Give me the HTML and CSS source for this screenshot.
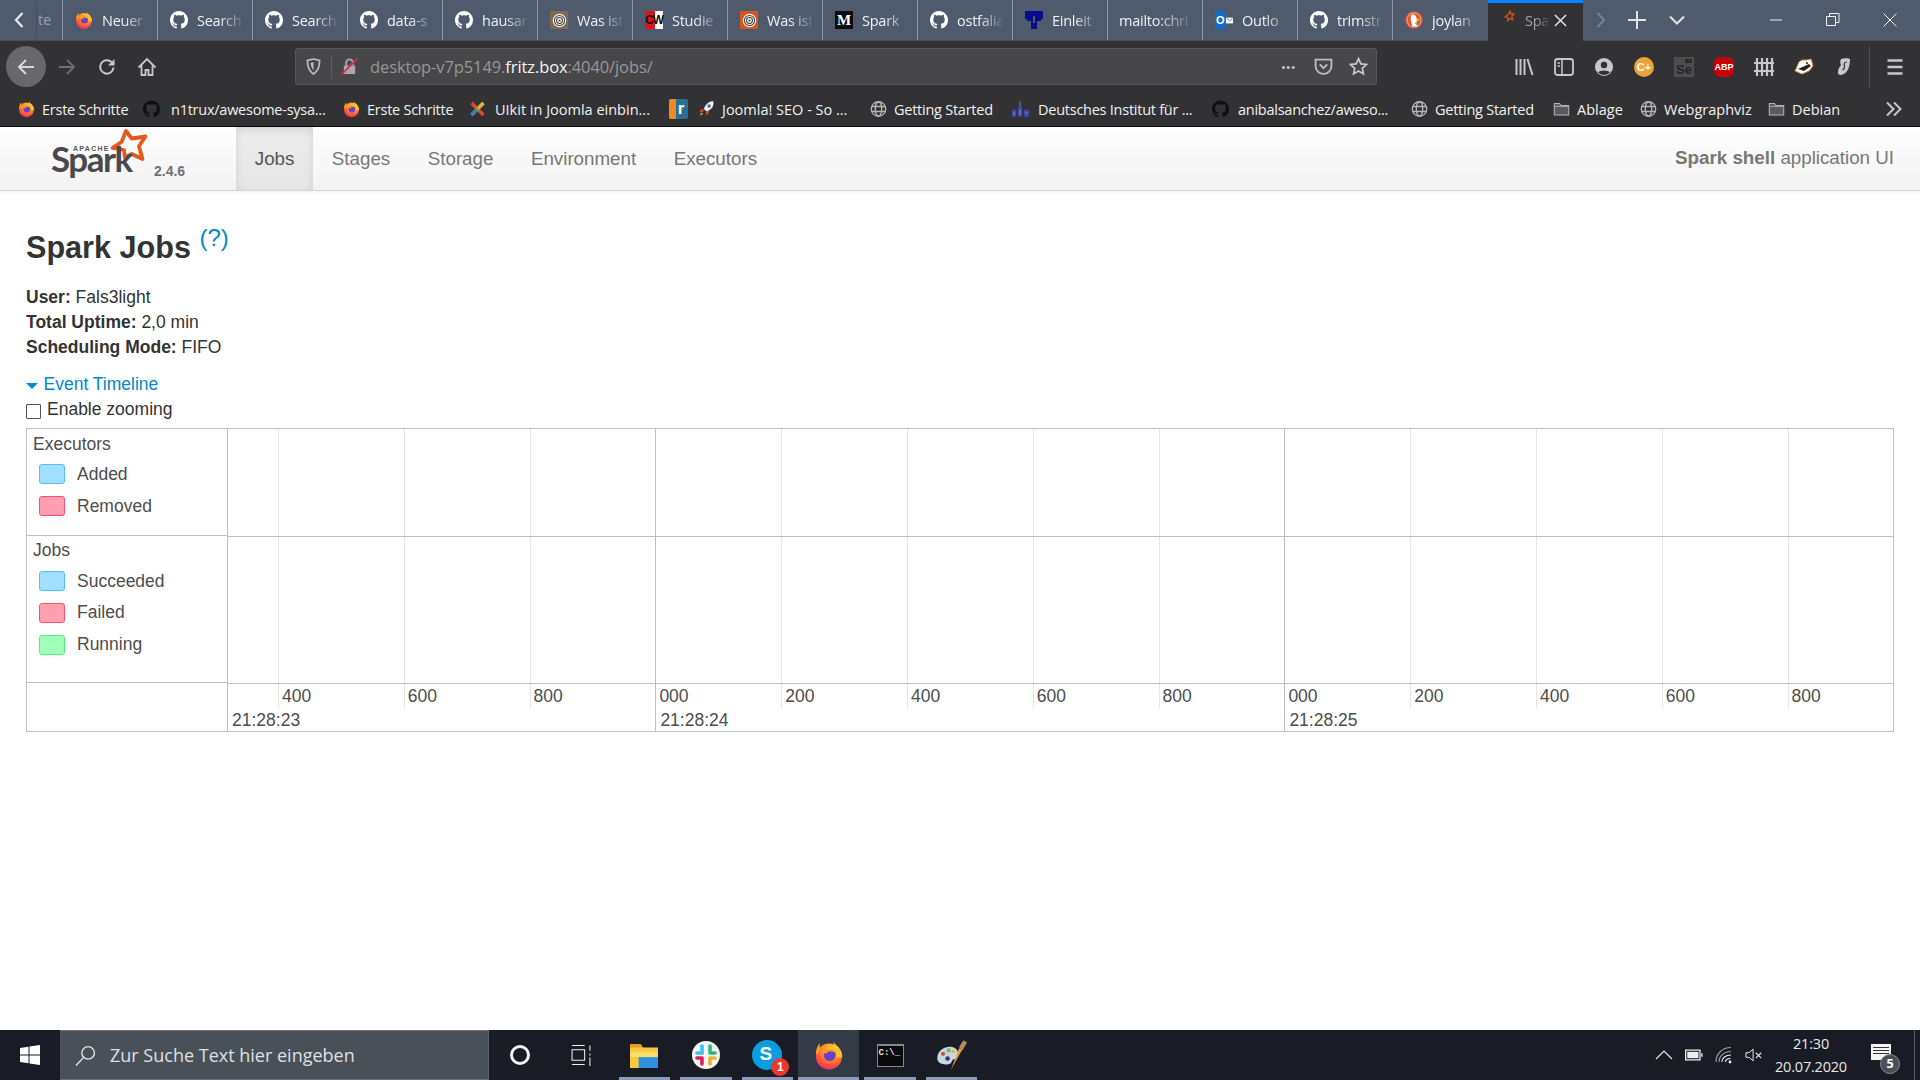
FILE: index.html
```html
<!DOCTYPE html>
<html lang="de">
<head>
<meta charset="utf-8">
<title>Spark shell - Spark Jobs</title>
<link rel="stylesheet" href="styles.css">
</head>
<body>
<svg class="defs" width="0" height="0" aria-hidden="true">
  <defs>
    <radialGradient id="ffg" cx="0.6" cy="0.25" r="0.85">
      <stop offset="0" stop-color="#ffd23d"/><stop offset="0.45" stop-color="#ff8a1f"/><stop offset="0.78" stop-color="#ff3f4f"/><stop offset="1" stop-color="#e3247a"/>
    </radialGradient>
    <symbol id="ff" viewBox="0 0 20 20">
      <circle cx="10" cy="11" r="8.700" fill="url(#ffg)"/>
      <path d="M13 0c0 2.500 1.800 3 3.500 5 1.500 2 2.500 4 2.300 6.500h-4C14.500 8 13 5 13 0z" fill="#ffc02e"/>
      <path d="M4 2c-.3 2-.3 3 0 4.500L2 10 1.300 9C1.300 6 2.500 3.500 4 2z" fill="#ff9f1f"/>
      <circle cx="10.500" cy="10" r="4" fill="#6a3fc9"/>
      <path d="M5.500 8c1.500-2 5-3 7.500-1.500 1.500.8 2 2 2 3-1-1.500-2.500-2-4-2-1.500 0-2 .5-2.500 1.500-1 .2-2-.3-3-1z" fill="#ff9f1f"/>
    </symbol>
    <symbol id="gh" viewBox="0 0 16 16">
      <path d="M8 0C3.580 0 0 3.580 0 8c0 3.540 2.290 6.530 5.470 7.590.4.070.55-.17.55-.38 0-.19-.01-.82-.01-1.490-2.010.37-2.530-.49-2.690-.94-.09-.23-.48-.94-.82-1.130-.28-.15-.68-.52-.01-.53.63-.01 1.080.58 1.230.82.72 1.210 1.870.87 2.330.66.07-.52.28-.87.51-1.070-1.780-.2-3.640-.89-3.640-3.950 0-.87.31-1.590.82-2.150-.08-.2-.36-1.020.08-2.120 0 0 .67-.21 2.200.82.64-.18 1.320-.27 2-.27.68 0 1.360.09 2 .27 1.530-1.040 2.200-.82 2.200-.82.44 1.100.16 1.920.08 2.120.51.56.82 1.270.82 2.150 0 3.070-1.870 3.750-3.650 3.950.29.25.54.73.54 1.480 0 1.070-.01 1.930-.01 2.200 0 .21.15.46.55.38A8.013 8.013 0 0 0 16 8c0-4.420-3.580-8-8-8z" fill="currentColor"/>
    </symbol>
    <symbol id="target" viewBox="0 0 20 20">
      <circle cx="10" cy="10" r="8" fill="#f4f1ea"/>
      <circle cx="10" cy="10" r="6" fill="none" stroke="#444" stroke-width="1.200"/>
      <circle cx="10" cy="10" r="3.500" fill="none" stroke="#444" stroke-width="1.200"/>
      <circle cx="10" cy="10" r="1.300" fill="#444"/>
    </symbol>
    <symbol id="globe" viewBox="0 0 20 20">
      <g fill="none" stroke="#b5b5b7" stroke-width="1.600">
        <circle cx="10" cy="10" r="8.500"/><ellipse cx="10" cy="10" rx="3.800" ry="8.500"/>
        <path d="M1.800 7h16.400M1.800 13h16.400"/>
      </g>
    </symbol>
    <symbol id="folder" viewBox="0 0 20 20">
      <path d="M1.500 3.500h6l2 2.500h9v11h-17z" fill="#5a5a5c" stroke="#b5b5b7" stroke-width="1.200"/>
      <path d="M1.500 7h17" stroke="#b5b5b7" stroke-width="1"/>
    </symbol>
  </defs>
</svg>

<div class="page">
  <div class="tabbar">
    <div class="tab tab-first">
      <svg class="tab-back" viewBox="0 0 12 18"><path d="M9.500 2 3 9l6.500 7" fill="none" stroke="#e6e8eb" stroke-width="2.200"/></svg>
      <span class="tab-sliver">te</span>
    </div>
    <div class="tab"><svg class="ti"><use href="#ff"/></svg><span class="tab-label">Neuer</span></div>
    <div class="tab"><svg class="ti gh-w"><use href="#gh"/></svg><span class="tab-label">Search</span></div>
    <div class="tab"><svg class="ti gh-w"><use href="#gh"/></svg><span class="tab-label">Search</span></div>
    <div class="tab"><svg class="ti gh-w"><use href="#gh"/></svg><span class="tab-label">data-s</span></div>
    <div class="tab"><svg class="ti gh-w"><use href="#gh"/></svg><span class="tab-label">hausar</span></div>
    <div class="tab"><span class="ti fav-target-a"><svg class="ti-in"><use href="#target"/></svg></span><span class="tab-label">Was ist</span></div>
    <div class="tab"><span class="ti fav-cw">CW</span><span class="tab-label">Studie</span></div>
    <div class="tab"><span class="ti fav-target-b"><svg class="ti-in"><use href="#target"/></svg></span><span class="tab-label">Was ist</span></div>
    <div class="tab"><span class="ti fav-m">M</span><span class="tab-label">Spark</span></div>
    <div class="tab"><svg class="ti gh-w"><use href="#gh"/></svg><span class="tab-label">ostfalia</span></div>
    <div class="tab"><svg class="ti" viewBox="0 0 18 18"><path d="M0 0h18v8h-2v2h-4v8H6v-8H2V8H0z" fill="#0a0a8c"/><path d="M8 5h2v7H8z" fill="#4f5b6d"/></svg><span class="tab-label">Einleit</span></div>
    <div class="tab tab-plain"><span class="tab-label">mailto:chri</span></div>
    <div class="tab"><span class="ti fav-ol"><span class="fav-ol-o">O</span><svg class="fav-ol-m" viewBox="0 0 9 9"><path d="M0 1h9v7H0z" fill="#fff"/><path d="m1 2 3.500 3L8 2" fill="none" stroke="#0f6fc6"/></svg></span><span class="tab-label">Outlo</span></div>
    <div class="tab"><svg class="ti gh-w"><use href="#gh"/></svg><span class="tab-label">trimstr</span></div>
    <div class="tab tab-last"><svg class="ti" viewBox="0 0 18 18"><circle cx="9" cy="9" r="8.700" fill="#de5833"/><circle cx="9" cy="9" r="7" fill="none" stroke="#f4c7b4" stroke-width=".7"/><path d="M6 4c3-1.500 5.500.5 5.500 3.500l2 1-2 1.200c0 2 .5 4 1 5.800H7.500C6.500 12 5 8 6 4z" fill="#fff"/><path d="M10 9l4-1.200-.2 2.400z" fill="#f2b02c"/><path d="M9.500 11.500l2.500.5-.3 2.500z" fill="#65bc46"/></svg><span class="tab-label">joylan</span></div>
    <div class="tab tab-active">
      <svg class="ti ti-spark" viewBox="0 0 18 18"><path d="m12 1 .8 3 3 0-2 2.500 1 3-3-1-2 2 0-3-2.500-1 3-2z" fill="none" stroke="#c8501e" stroke-width="1.500"/></svg>
      <span class="tab-label tab-label-active">Spa</span>
      <svg class="tab-x" viewBox="0 0 14 14"><path d="m1 1 12 12M13 1 1 13" stroke="#e6e6e8" stroke-width="1.600"/></svg>
    </div>
    <div class="tabbar-tools">
      <svg class="tool-fwd" viewBox="0 0 12 18"><path d="M2.500 2 9 9l-6.500 7" fill="none" stroke="#79838f" stroke-width="2"/></svg>
      <svg class="tool-plus" viewBox="0 0 18 18"><path d="M9 0v18M0 9h18" stroke="#e0e3e6" stroke-width="2"/></svg>
      <svg class="tool-down" viewBox="0 0 16 10"><path d="m1 1.500 7 7 7-7" fill="none" stroke="#e0e3e6" stroke-width="2"/></svg>
    </div>
    <div class="winctl">
      <svg class="win-btn" viewBox="0 0 14 14"><path d="M1 7h12" stroke="#f2f2f2" stroke-width="1"/></svg>
      <svg class="win-btn" viewBox="0 0 14 14"><path d="M.5 3.500h9v9h-9zM3.500 3.500v-3h9.500v9h-3.500" fill="none" stroke="#f2f2f2" stroke-width="1"/></svg>
      <svg class="win-btn" viewBox="0 0 14 14"><path d="m.5.5 13 13M13.500.5l-13 13" stroke="#f2f2f2" stroke-width="1"/></svg>
    </div>
  </div>

  <div class="toolbar">
    <div class="nav-btn back-btn"><svg viewBox="0 0 20 20" class="nav-ic"><path d="M18 10H3M10 3l-7 7 7 7" fill="none" stroke="#d8d8d8" stroke-width="2"/></svg></div>
    <div class="nav-btn"><svg viewBox="0 0 20 20" class="nav-ic"><path d="M2 10h15M10 3l7 7-7 7" fill="none" stroke="#6f6f71" stroke-width="1.800"/></svg></div>
    <div class="nav-btn"><svg viewBox="0 0 20 20" class="nav-ic"><path d="M16.500 10.500a6.700 6.700 0 1 1-2-5.400L17 7.500" fill="none" stroke="#c8c8ca" stroke-width="2"/><path d="M17.500 2v6.500H11z" fill="#c8c8ca"/></svg></div>
    <div class="nav-btn"><svg viewBox="0 0 20 20" class="nav-ic"><path d="M1.500 10.500 10 2l8.500 8.500M4.500 8.500V18h4v-5h3v5h4V8.500" fill="none" stroke="#c8c8ca" stroke-width="1.800"/></svg></div>
    <div class="urlbar">
      <svg class="url-shield" viewBox="0 0 16 18"><path d="M1.500 2.500 8 1l6.500 1.500c0 6-1 11-6.500 14.500C2.500 13.500 1.500 8.500 1.500 2.500z" fill="none" stroke="#bdbdbf" stroke-width="1.800"/><path d="M5 5l3-.6V13C6 11 5 8 5 5z" fill="#bdbdbf"/></svg>
      <span class="url-sep"></span>
      <svg class="url-lock" viewBox="0 0 18 18"><path d="M3 8h12v9H3z" fill="#a9a9ab"/><path d="M5.500 8V5a3.500 3.500 0 0 1 7 0v3" fill="none" stroke="#a9a9ab" stroke-width="2"/><path d="M1 17 17 1" stroke="#e22850" stroke-width="2"/></svg>
      <span class="url-text">desktop-v7p5149.<b class="url-host">fritz.box</b>:4040/jobs/</span>
      <span class="url-dots">•••</span>
      <svg class="url-ic" viewBox="0 0 18 18"><path d="M1.500 2.500h15v6a7.500 7.500 0 0 1-15 0z" fill="none" stroke="#bdbdbf" stroke-width="1.800"/><path d="m5.500 7 3.500 3.500L12.500 7" fill="none" stroke="#bdbdbf" stroke-width="1.800"/></svg>
      <svg class="url-ic url-star" viewBox="0 0 20 20"><path d="m10 1.800 2.500 5.400 5.800.7-4.300 4 1.200 5.900-5.200-3-5.200 3 1.200-5.900-4.300-4 5.800-.7z" fill="none" stroke="#c8c8ca" stroke-width="1.800"/></svg>
    </div>
    <div class="ext-row">
      <svg class="ext" viewBox="0 0 20 20"><path d="M2.500 2v16M6.500 2v16M10.500 2v16M13.500 2l5 16" fill="none" stroke="#c8c8ca" stroke-width="2"/></svg>
      <svg class="ext" viewBox="0 0 20 20"><rect x="1" y="2" width="18" height="16" rx="2.500" fill="none" stroke="#c8c8ca" stroke-width="1.800"/><path d="M8 2v16M3.500 6h2.500M3.500 9h2.500" stroke="#c8c8ca" stroke-width="1.500"/></svg>
      <svg class="ext" viewBox="0 0 20 20"><circle cx="10" cy="10" r="9" fill="#c8c8ca"/><circle cx="10" cy="8" r="3.200" fill="#323234"/><path d="M3.800 15.500c2-2.800 10.400-2.800 12.400 0A9 9 0 0 1 3.800 15.500z" fill="#323234"/></svg>
      <span class="ext ext-cplus">C+</span>
      <span class="ext ext-se">Se<span class="se-cam"></span></span>
      <span class="ext ext-abp">ABP</span>
      <svg class="ext" viewBox="0 0 20 20"><path d="M3 1v18M8 1v18M13 1v18M18 1v18M0 6h20M0 14h20" stroke="#c8c8ca" stroke-width="2.200"/></svg>
      <svg class="ext" viewBox="0 0 20 20"><path d="M1 14 5 5l3-2h5l4-1 1 3 1 4-4 5-7 3z" fill="#fff" stroke="#d98a3a"/><path d="M4 12 15 7l2 2-7 5z" fill="#222"/><circle cx="13" cy="6" r="1" fill="#222"/></svg>
      <svg class="ext" viewBox="0 0 20 20"><path d="M7 2c3-1 7-1 9 0 0 7-2 15-9 16-2 0-3-1-3-2 0-5 2-6 3-8-1-2-1-4 0-6z" fill="#c8c8ca"/><path d="M13 5c-3 0-3 2-2.500 4 .3 2-.5 3-2 4" fill="none" stroke="#323234" stroke-width="1.200"/></svg>
      <span class="ext-sep"></span>
      <svg class="ext" viewBox="0 0 20 20"><path d="M2.500 3.500h15M2.500 10h15M2.500 16.500h15" stroke="#c8c8ca" stroke-width="2.400"/></svg>
    </div>
  </div>

  <div class="bookmarks">
    <div class="bm bm-1"><svg class="bi"><use href="#ff"/></svg><span>Erste Schritte</span></div>
    <div class="bm bm-2"><svg class="bi gh-k"><use href="#gh"/></svg><span>n1trux/awesome-sysa...</span></div>
    <div class="bm bm-3"><svg class="bi"><use href="#ff"/></svg><span>Erste Schritte</span></div>
    <div class="bm bm-4"><svg class="bi" viewBox="0 0 20 20"><path d="m3 3 14 14" stroke="#e2492c" stroke-width="4"/><path d="M17 3 3 17" stroke="#5fb04a" stroke-width="4"/><path d="m3 17 6-6" stroke="#3d7fc2" stroke-width="4"/><path d="m17 3-6 6" stroke="#f3a93a" stroke-width="4"/></svg><span>UIkit in Joomla einbin...</span></div>
    <div class="bm bm-5"><span class="bi fav-r">r</span></div>
    <div class="bm bm-6"><svg class="bi" viewBox="0 0 20 20"><path d="M18 1c-5 0-9 3-11 9l3 3c6-2 9-6 8-12z" fill="#f1f1f1"/><circle cx="13" cy="6.500" r="2" fill="#2d6cc0"/><path d="M7 10 3 11l-1 3 4-1zM10 13l-1 4 3-1 1-4z" fill="#e2492c"/><path d="m4 14-2 4 4-2z" fill="#f2a73a"/></svg><span>Joomla! SEO - So ...</span></div>
    <div class="bm bm-7"><svg class="bi"><use href="#globe"/></svg><span>Getting Started</span></div>
    <div class="bm bm-8"><svg class="bi" viewBox="0 0 20 20"><path d="M0 11h5v8H0zM7 7h5v12H7zM14 11h6v8h-6z" fill="#3d4aa8"/><path d="M9 1h1v6H9z" fill="#8090d8"/><path d="M2 14h1v3H2zM9 11h1v6H9zM16 14h2v1h-2z" fill="#9aa3e0"/></svg><span>Deutsches Institut für ...</span></div>
    <div class="bm bm-9"><svg class="bi gh-k"><use href="#gh"/></svg><span>anibalsanchez/aweso...</span></div>
    <div class="bm bm-10"><svg class="bi"><use href="#globe"/></svg><span>Getting Started</span></div>
    <div class="bm bm-11"><svg class="bi"><use href="#folder"/></svg><span>Ablage</span></div>
    <div class="bm bm-12"><svg class="bi"><use href="#globe"/></svg><span>Webgraphviz</span></div>
    <div class="bm bm-13"><svg class="bi"><use href="#folder"/></svg><span>Debian</span></div>
    <svg class="bm-more" viewBox="0 0 18 16"><path d="m2 1.500 6.500 6.500L2 14.500M9 1.500l6.500 6.500L9 14.500" fill="none" stroke="#c8c8ca" stroke-width="2"/></svg>
  </div>

  <nav class="spark-nav">
    <div class="brand">
      <svg class="spark-logo" viewBox="0 0 100 52">
        <path d="M75-1 80.700 6.500 94.500 4.500 88 14 91.500 27 80.700 22 74 26 73 18 61.500 16 70.700 9.700z" fill="none" stroke="#e25a1c" stroke-width="3.800" stroke-linejoin="round"/>
        <text class="logo-apache" x="22" y="19">APACHE</text>
        <text class="logo-spark" x="0" y="40">Spark</text>
      </svg>
      <span class="version">2.4.6</span>
    </div>
    <a class="nav-link active">Jobs</a>
    <a class="nav-link">Stages</a>
    <a class="nav-link">Storage</a>
    <a class="nav-link">Environment</a>
    <a class="nav-link">Executors</a>
    <p class="app-name"><strong>Spark shell</strong> application UI</p>
  </nav>

  <main class="content">
    <h3 class="title">Spark Jobs <sup class="help">(?)</sup></h3>
    <ul class="summary">
      <li><strong>User:</strong> Fals3light</li>
      <li><strong>Total Uptime:</strong> 2,0 min</li>
      <li><strong>Scheduling Mode:</strong> FIFO</li>
    </ul>
    <div class="expander"><span class="caret"></span><span>Event Timeline</span></div>
    <label class="zoom-opt"><input type="checkbox" class="zoom-check"><span>Enable zooming</span></label>
    <div class="timeline">
      <div class="legend">
        <div class="legend-group group-exec">
          <div class="legend-title">Executors</div>
          <div class="legend-item"><span class="swatch blue"></span>Added</div>
          <div class="legend-item"><span class="swatch red"></span>Removed</div>
        </div>
        <div class="legend-group group-jobs">
          <div class="legend-title">Jobs</div>
          <div class="legend-item"><span class="swatch blue"></span>Succeeded</div>
          <div class="legend-item"><span class="swatch red"></span>Failed</div>
          <div class="legend-item"><span class="swatch green"></span>Running</div>
        </div>
      </div>
      <div class="chart">
        <div class="grid-row row-exec">
          <div class="gc"></div><div class="gc"></div><div class="gc"></div><div class="gc major"></div><div class="gc"></div><div class="gc"></div><div class="gc"></div><div class="gc"></div><div class="gc major"></div><div class="gc"></div><div class="gc"></div><div class="gc"></div><div class="gc"></div><div class="gc last"></div>
        </div>
        <div class="grid-row row-jobs">
          <div class="gc"></div><div class="gc"></div><div class="gc"></div><div class="gc major"></div><div class="gc"></div><div class="gc"></div><div class="gc"></div><div class="gc"></div><div class="gc major"></div><div class="gc"></div><div class="gc"></div><div class="gc"></div><div class="gc"></div><div class="gc last"></div>
        </div>
        <div class="grid-row row-axis">
          <div class="ax"><div class="tick"></div><div class="time">21:28:23</div></div>
          <div class="ax"><div class="tick">400</div></div>
          <div class="ax"><div class="tick">600</div></div>
          <div class="ax major"><div class="tick tick-major">800</div></div>
          <div class="ax"><div class="tick">000</div><div class="time">21:28:24</div></div>
          <div class="ax"><div class="tick">200</div></div>
          <div class="ax"><div class="tick">400</div></div>
          <div class="ax"><div class="tick">600</div></div>
          <div class="ax major"><div class="tick tick-major">800</div></div>
          <div class="ax"><div class="tick">000</div><div class="time">21:28:25</div></div>
          <div class="ax"><div class="tick">200</div></div>
          <div class="ax"><div class="tick">400</div></div>
          <div class="ax"><div class="tick">600</div></div>
          <div class="ax last"><div class="tick tick-major">800</div></div>
        </div>
      </div>
    </div>
  </main>

  <footer class="taskbar">
    <div class="start"><svg class="win-logo" viewBox="0 0 20 20"><path d="M0 3l8.500-1.200V9.500H0zM9.500 1.600 20 0v9.500H9.500zM0 10.500h8.500v7.700L0 17zM9.500 10.500H20V20L9.500 18.400z" fill="#fff"/></svg></div>
    <div class="search"><svg class="search-ic" viewBox="0 0 20 20"><circle cx="12.500" cy="7.500" r="6" fill="none" stroke="#e8e8e8" stroke-width="1.300"/><path d="M8 12 1 19.500" stroke="#e8e8e8" stroke-width="1.300"/></svg><span>Zur Suche Text hier eingeben</span></div>
    <div class="tb-cell"><span class="cortana"></span></div>
    <div class="tb-cell tb-view"><svg class="tb-ic-view" viewBox="0 0 20 20"><path d="M1 .5h12M1 4.500h12v10H1zM1 18.500h12M18 .5v5M18 8v2M18 12v8" fill="none" stroke="#f0f0f0"/></svg></div>
    <div class="tb-cell app"><svg class="tb-ic" viewBox="0 0 26 24"><path d="M0 2h10l2 3h14v19H0z" fill="#f7c83f"/><path d="M0 2h10l2 3H0z" fill="#e0a020"/><path d="M8 13h18v11H8z" fill="#2f8fe0"/><path d="M0 9h26v5H0z" fill="#fbdc6a"/></svg></div>
    <div class="tb-cell app"><svg class="tb-ic-lg" viewBox="0 0 28 28"><circle cx="14" cy="14" r="14" fill="#f4f4f4"/><path d="M10 5v7" stroke="#36c5f0" stroke-width="3.600" stroke-linecap="round"/><path d="M5 12h5" stroke="#36c5f0" stroke-width="3.600" stroke-linecap="round"/><path d="M18 5v7M18 12h5" stroke="#2eb67d" stroke-width="3.600" stroke-linecap="round"/><path d="M5 17h5M10 17v6" stroke="#e01e5a" stroke-width="3.600" stroke-linecap="round"/><path d="M18 17h5M18 17v6" stroke="#ecb22e" stroke-width="3.600" stroke-linecap="round"/></svg></div>
    <div class="tb-cell app"><span class="skype"><span class="skype-s">S</span><span class="skype-badge">1</span></span></div>
    <div class="tb-cell app app-active"><svg class="tb-ic-ff"><use href="#ff"/></svg></div>
    <div class="tb-cell app"><span class="cmd">C:\_</span></div>
    <div class="tb-cell app"><svg class="tb-ic-paint" viewBox="0 0 28 28"><path d="M2 17C2 10 9 6 15 7c4 1 6 4 5 8-1 3-4 2-5 4-1 3-4 4-7 3-3 0-6-2-6-5z" fill="#c5d8e8"/><circle cx="7" cy="13" r="1.800" fill="#e2492c"/><circle cx="12" cy="10" r="1.800" fill="#6fbf4a"/><circle cx="16" cy="11" r="1.600" fill="#f2b02c"/><circle cx="11" cy="17" r="2" fill="#335"/><path d="M14 27 21 8l3 1z" fill="#e8a23c"/><path d="M21 7l4-6 3 2-4 7z" fill="#b88a5a"/></svg></div>
    <div class="tray">
      <svg class="tray-ic" viewBox="0 0 18 18"><path d="m1 13 8-8 8 8" fill="none" stroke="#e8e8e8" stroke-width="1.200"/></svg>
      <svg class="tray-ic" viewBox="0 0 20 18"><path d="M.7 3.700h16v10.600H.7z" fill="none" stroke="#f0f0f0" stroke-width="1.400"/><path d="M2.500 5.500h12.500v7H2.500z" fill="#f0f0f0"/><path d="M18 7h1.500v4H18z" fill="#f0f0f0"/></svg>
      <svg class="tray-ic" viewBox="0 0 18 18"><g fill="none" stroke="#9a9ea4" stroke-width="1.100"><path d="M1 16C1 8 7 1.500 16 1.500"/><path d="M4 16c0-5.500 4.500-10.500 12-10.500"/></g><g fill="none" stroke="#f0f0f0" stroke-width="1.100"><path d="M7 16c0-4 3.500-7 9-7"/><path d="M10.500 16c0-2 2-3.500 5-3.500"/></g><circle cx="15" cy="16" r="1.400" fill="#f0f0f0"/></svg>
      <svg class="tray-ic" viewBox="0 0 20 18"><path d="M1 6.500h3.500L9 2.500v13l-4.500-4H1z" fill="none" stroke="#e8e8e8" stroke-width="1.100"/><path d="m12 6.500 6 6M18 6.500l-6 6" stroke="#e8e8e8" stroke-width="1.200"/></svg>
      <div class="clock"><span>21:30</span><span>20.07.2020</span></div>
      <div class="notify"><span class="note-box"><span class="note-line"></span><span class="note-line"></span><span class="note-line"></span></span><span class="note-badge">5</span></div>
    </div>
  </footer>
</div>
</body>
</html>
```

FILE: styles.css
```css
* { box-sizing: border-box; }
html, body { margin: 0; height: 100%; }
body { font-family: "Liberation Sans", Arial, sans-serif; color: #333; background: #fff; overflow: hidden; }
.defs { position: absolute; }
.page { display: flex; flex-direction: column; height: 1080px; }

/* tab strip */
.tabbar { display: flex; height: 41px; background: #4f5b6d; flex: none; font-family: "Open Sans", sans-serif; border-bottom: 1px solid #444e5d; }
.tab { width: 95px; flex: none; display: flex; align-items: center; gap: 9px; padding: 0 10px 0 12px; border-right: 1px solid #8d97a5; overflow: hidden; color: #eef0f3; }
.tab-first { width: 63px; padding: 0 0 0 13px; gap: 0; }
.tab-back { width: 12px; height: 18px; flex: none; }
.tab-sliver { margin-left: 11px; padding-left: 1px; height: 40px; line-height: 40px; font-size: 14.500px; opacity: .45; border-left: 1px solid #39424f; }
.tab-label { font-size: 14.500px; letter-spacing: -.25px; white-space: nowrap; flex: 1; min-width: 0; -webkit-mask-image: linear-gradient(90deg, #000 50%, rgba(0,0,0,.12) 100%); mask-image: linear-gradient(90deg, #000 50%, rgba(0,0,0,.12) 100%); }
.tab-plain { padding-left: 11px; }
.tab-last { border-right: 0; }
.tab-active { background: #323234; border-top: 3px solid #0a84ff; border-right: 0; height: 41px; padding: 0 0 3px 10px; gap: 6px; color: #a4a4a6; }
.tab-label-active { flex: none; margin-left: 3px; }
.tab-x { width: 13px; height: 13px; flex: none; margin-left: -1px; }
.ti { width: 18px; height: 18px; flex: none; display: flex; align-items: center; justify-content: center; }
.ti-in { width: 17px; height: 17px; }
.ti-spark { margin-top: -4px; }
.gh-w { color: #fff; }
.gh-k { color: #0f0f10; }
.fav-target-a { background: #7c6a55; }
.fav-target-b { background: #d9531e; }
.fav-cw { background: linear-gradient(90deg, #d8141c 55%, #fff 55%); color: #111; font: 700 12px "Liberation Sans", sans-serif; letter-spacing: -1px; }
.fav-m { background: #0d0d0d; color: #fff; font: 700 15px "Liberation Serif", serif; }
.fav-ol { background: linear-gradient(90deg, #0f6fc6 62%, transparent 62%); justify-content: flex-start; padding-left: 1px; }
.fav-ol-o { color: #fff; font: 700 11px "Liberation Sans", sans-serif; }
.fav-ol-m { width: 9px; height: 9px; margin-left: 1px; }
.tabbar-tools { display: flex; align-items: center; padding-left: 12px; }
.tool-fwd { width: 12px; height: 18px; margin-bottom: 1px; }
.tool-plus { width: 18px; height: 18px; margin-left: 21px; }
.tool-down { width: 16px; height: 10px; margin-left: 23px; }
.winctl { margin-left: auto; display: flex; align-items: center; padding-right: 23px; gap: 43px; }
.win-btn { width: 14px; height: 14px; }

/* toolbar */
.toolbar { display: flex; align-items: center; height: 51px; background: #323234; flex: none; padding-left: 6px; }
.nav-btn { width: 40px; height: 41px; display: flex; align-items: center; justify-content: center; flex: none; }
.back-btn { background: #68686a; border-radius: 50%; margin-right: 1px; }
.nav-ic { width: 20px; height: 20px; }
.urlbar { width: 1082px; height: 37px; margin-left: 128px; background: #474749; border: 1px solid #58585a; border-radius: 3px; display: flex; align-items: center; padding-left: 10px; flex: none; }
.url-shield { width: 15px; height: 17px; flex: none; }
.url-sep { width: 1px; height: 24px; background: #5e5e60; margin: 0 9px 0 10px; flex: none; }
.url-lock { width: 17px; height: 17px; flex: none; }
.url-text { margin-left: 12px; font: 400 16.500px "Open Sans", sans-serif; color: #97979a; letter-spacing: -.1px; flex: 1; white-space: nowrap; }
.url-host { font-weight: 400; color: #f5f5f5; }
.url-dots { font-size: 11px; color: #c8c8ca; letter-spacing: 1px; margin-right: 18px; }
.url-ic { width: 19px; height: 19px; flex: none; }
.url-star { margin: 0 8px 0 16px; }
.ext-row { display: flex; align-items: center; margin-left: 137px; gap: 20px; flex: none; }
.ext { width: 20px; height: 20px; flex: none; display: flex; align-items: center; justify-content: center; }
.ext-cplus { background: #eda33c; border-radius: 50%; color: #fff; font: 700 11px "Liberation Sans", sans-serif; }
.ext-se { background: #4d4d4e; color: #232324; font: 700 13px/14px "Liberation Sans", sans-serif; align-items: flex-end; position: relative; }
.se-cam { position: absolute; right: 2px; top: 2px; width: 7px; height: 4px; background: #2a2a2b; }
.ext-abp { background: #c60006; border-radius: 6px; color: #fff; font: 700 9px "Liberation Sans", sans-serif; }
.ext-sep { width: 1px; height: 42px; background: #4f4f51; margin: 0 -5px 0 -5px; flex: none; }

/* bookmarks */
.bookmarks { display: flex; align-items: center; height: 35px; background: #323234; border-bottom: 1px solid #0c0c0c; flex: none; font: 400 14.500px "Open Sans", sans-serif; letter-spacing: -.25px; color: #f1f1f1; padding-left: 18px; }
.bm { display: flex; align-items: center; gap: 7px; flex: none; white-space: nowrap; }
.bi { width: 17px; height: 18px; flex: none; display: block; }
.bm-1 { width: 125px; } .bm-2 { width: 200px; gap: 11px; } .bm-3 { width: 126px; } .bm-4 { width: 200px; gap: 9px; }
.bm-5 { width: 29px; } .bm-6 { width: 172px; } .bm-7 { width: 142px; } .bm-8 { width: 200px; gap: 9px; }
.bm-9 { width: 199px; gap: 9px; } .bm-10 { width: 142px; } .bm-11 { width: 87px; } .bm-12 { width: 128px; } .bm-13 { width: 90px; }
.bm-4 span, .bm-6 span, .bm-11 span, .bm-12 span, .bm-13 span { letter-spacing: 0; }
.bm-more { width: 18px; height: 16px; margin-left: 27px; flex: none; }
.fav-r { width: 19px; height: 20px; background: linear-gradient(90deg, #f08a24 35%, #2c6f95 35%); border-radius: 2px; color: #fff; font: 700 17px "Liberation Sans", sans-serif; text-align: right; padding-right: 4px; line-height: 19px; }

/* spark nav */
.spark-nav { display: flex; align-items: stretch; height: 64px; flex: none; background: linear-gradient(#fff, #f2f2f2); border-bottom: 1px solid #d4d4d4; box-shadow: 0 1px 4px rgba(0,0,0,.07); font-size: 18.750px; color: #777; }
.brand { width: 236px; flex: none; display: flex; align-items: flex-end; padding: 0 0 10px 51px; }
.spark-logo { width: 100px; height: 52px; flex: none; margin-bottom: -4px; overflow: visible; }
.logo-apache { font: 700 7px "Liberation Sans", sans-serif; letter-spacing: 1.300px; fill: #59595b; }
.logo-spark { font: 700 35px "Lato", sans-serif; letter-spacing: -1.500px; fill: #4a4a4c; }
.version { font-size: 14px; font-weight: 700; color: #6f7276; margin-left: 3px; margin-bottom: 1px; }
.nav-link { display: flex; align-items: center; padding: 0 18.750px; color: #777; }
.nav-link.active { background: linear-gradient(#ececec, #e6e6e6); color: #555; box-shadow: inset 0 3px 8px rgba(0,0,0,.1); }
.app-name { margin: -2px 26px 0 auto; align-self: center; font-size: 18.750px; }

/* content */
.content { flex: 1; padding: 0 26px; font-size: 17.500px; line-height: 25px; min-height: 0; }
.title { margin: 31px 0 13px; font-size: 30.600px; line-height: 50px; font-weight: 700; color: #333; }
.help { font-size: 24px; font-weight: 400; color: #0088cc; vertical-align: baseline; position: relative; top: -12px; line-height: 0; }
.summary { list-style: none; margin: 0 0 12px; padding: 0; }
.expander { color: #0088cc; display: flex; align-items: center; gap: 5.500px; }
.caret { width: 0; height: 0; border-left: 6px solid transparent; border-right: 6px solid transparent; border-top: 6px solid #0088cc; margin-top: 2px; }
.zoom-opt { display: flex; align-items: center; gap: 6px; }
.zoom-check { appearance: none; -webkit-appearance: none; width: 15px; height: 15px; margin: 3px 0 0 0; border: 1px solid #555; background: #fff; border-radius: 1px; }
.timeline { display: flex; height: 304px; margin-top: 6px; border: 1px solid #bfbfbf; color: #4d4d4d; }
.legend { width: 201px; flex: none; border-right: 1px solid #bfbfbf; display: flex; flex-direction: column; }
.legend-group { flex: none; padding: 3px 0 0 6px; border-bottom: 1px solid #bfbfbf; }
.group-exec { height: 107px; }
.group-jobs { height: 147px; padding-top: 1.500px; }
.legend-title { height: 25px; line-height: 25px; margin-bottom: 1.500px; }
.group-jobs .legend-title { margin-bottom: 2.750px; }
.legend-item { height: 31.800px; display: flex; align-items: center; gap: 12px; padding-left: 6px; }
.swatch { width: 26px; height: 20px; border-radius: 3px; border: 1.300px solid; flex: none; }
.blue { background: #a0dfff; border-color: #50bfff; }
.red { background: #ffa0b0; border-color: #ff5070; }
.green { background: #a0ffb8; border-color: #50f080; }
.chart { flex: 1; min-width: 0; display: flex; flex-direction: column; }
.grid-row { flex: none; display: grid; grid-template-columns: 51px repeat(12, 125.800px) 1fr; }
.row-exec { height: 108px; border-bottom: 1px solid #bfbfbf; }
.row-jobs { height: 147px; border-bottom: 1px solid #bfbfbf; }
.row-axis { height: 47px; grid-template-rows: 47px; font-size: 17.500px; line-height: 25px; }
.gc { border-right: 1px solid #e5e5e5; }
.gc.major { border-right-color: #bfbfbf; }
.gc.last { border-right: 0; }
.ax { min-width: 0; white-space: nowrap; }
.ax.major { border-right: 1px solid #bfbfbf; }
.tick { height: 24px; padding-left: 3px; line-height: 25px; border-right: 1px solid #e5e5e5; }
.tick-major { border-right: 0; }
.ax .time { padding-left: 4px; }

/* taskbar */
.taskbar { display: flex; height: 50px; flex: none; background: #191c24; color: #fff; }
.start { width: 60px; display: flex; align-items: center; justify-content: center; }
.win-logo { width: 20px; height: 20px; }
.search { width: 429px; flex: none; background: #4a5058; border-top: 1px solid #6b7077; border-bottom: 1px solid #6b7077; border-right: 1px solid #5a5f66; display: flex; align-items: center; padding-left: 15px; gap: 14px; font: 400 18px "Open Sans", sans-serif; color: #dde0e3; }
.search-ic { width: 21px; height: 21px; flex: none; }
.tb-cell { width: 61.400px; flex: none; display: flex; align-items: center; justify-content: center; position: relative; }
.tb-view { margin-right: 2px; }
.cortana { width: 20px; height: 20px; border: 3px solid #f4f4f4; border-radius: 50%; }
.tb-ic-view { width: 21px; height: 21px; }
.app::after { content: ""; position: absolute; left: 5px; right: 5px; bottom: 0; height: 3px; background: #8d9bb6; }
.app-active { background: #333b47; }
.app-active::after { left: 0; right: 0; }
.tb-ic { width: 28px; height: 26px; }
.tb-ic-lg { width: 28px; height: 28px; }
.tb-ic-ff { width: 30px; height: 30px; }
.tb-ic-paint { width: 32px; height: 32px; }
.skype { width: 30px; height: 30px; position: relative; background: #0a9de0; border-radius: 50%; display: flex; align-items: center; justify-content: center; }
.skype-s { font: 700 19px "Liberation Sans", sans-serif; color: #fff; margin-right: 3px; margin-top: -3px; }
.skype-badge { position: absolute; right: -7px; bottom: -6px; width: 18px; height: 18px; border-radius: 50%; background: #e8392f; font: 700 12px/18px "Liberation Sans", sans-serif; text-align: center; }
.cmd { width: 27px; height: 23px; background: #0a0a0a; border: 1px solid #85888d; border-top-width: 2px; font: 700 9px/14px "Liberation Mono", monospace; color: #e8e8e8; padding-left: 1px; }
.tray { margin-left: auto; display: flex; align-items: center; margin-right: 5px; }
.tray-ic { width: 18px; height: 18px; margin: 0 6px; flex: none; }
.clock { width: 84px; display: flex; flex-direction: column; align-items: center; font: 400 14.500px/23px "Open Sans", sans-serif; color: #e8e8e8; letter-spacing: -.2px; }
.notify { width: 62px; height: 50px; position: relative; display: flex; align-items: center; justify-content: center; border-right: 1px solid #55585f; }
.note-box { width: 20px; height: 16px; background: #f4f4f4; display: flex; flex-direction: column; gap: 2px; padding: 3px 2px; margin-top: -6px; margin-left: -6px; }
.note-line { height: 1px; background: #333; }
.note-badge { position: absolute; left: 27px; top: 24px; width: 20px; height: 20px; border-radius: 50%; background: #4a5058; border: 1px solid #888; font: 700 12.500px/18px "Open Sans", sans-serif; text-align: center; }
```
